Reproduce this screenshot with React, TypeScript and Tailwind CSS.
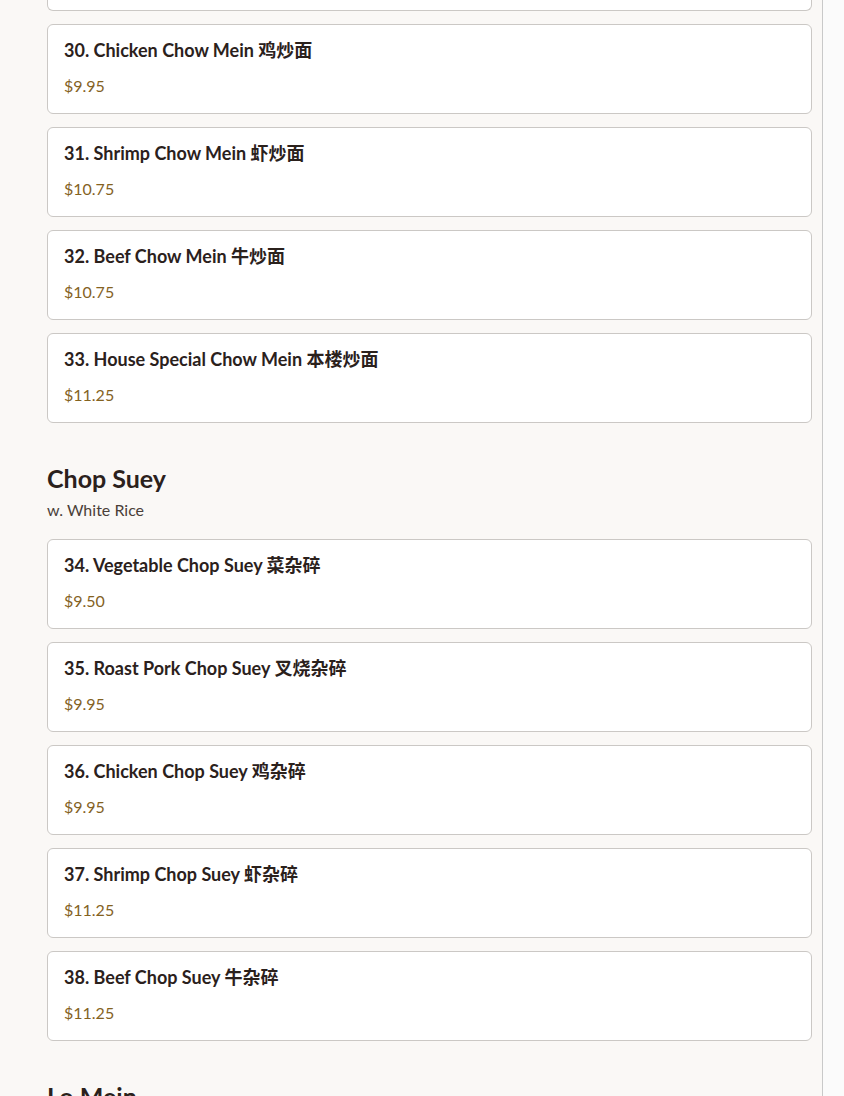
const SECTIONS = [
  {
    title: null as string | null,
    note: null as string | null,
    items: [
      { n: 30, name: "Chicken Chow Mein", zh: "鸡炒面", price: "9.95" },
      { n: 31, name: "Shrimp Chow Mein", zh: "虾炒面", price: "10.75" },
      { n: 32, name: "Beef Chow Mein", zh: "牛炒面", price: "10.75" },
      { n: 33, name: "House Special Chow Mein", zh: "本楼炒面", price: "11.25" },
    ],
  },
  {
    title: "Chop Suey",
    note: "w. White Rice",
    items: [
      { n: 34, name: "Vegetable Chop Suey", zh: "菜杂碎", price: "9.50" },
      { n: 35, name: "Roast Pork Chop Suey", zh: "叉烧杂碎", price: "9.95" },
      { n: 36, name: "Chicken Chop Suey", zh: "鸡杂碎", price: "9.95" },
      { n: 37, name: "Shrimp Chop Suey", zh: "虾杂碎", price: "11.25" },
      { n: 38, name: "Beef Chop Suey", zh: "牛杂碎", price: "11.25" },
    ],
  },
  {
    title: "Lo Mein",
    note: "w. White Rice",
    items: [],
  },
];

export default function App() {
  return (
    <div className="flex h-[1096px] w-full overflow-hidden bg-[#fbfbfb] font-['Lato','Noto_Sans_CJK_SC',sans-serif] text-[#2b211c]">
      <main className="w-[823px] shrink-0 border-r border-[#c9c9c9] bg-[#faf8f6] pl-[47px] pr-[10px]">
        {/* bas de la carte précédente (29), coupée par le défilement */}
        <div className="h-[11px] rounded-b-md border border-t-0 border-[#cbc8c5] bg-white" />
        <div className="mt-[13px] flex flex-col">
          {SECTIONS.map((s, i) => (
            <section key={i} className={i > 0 ? "mt-[39px]" : ""}>
              {s.title && (
                <>
                  <h2 className="text-[25px] font-bold leading-8">{s.title}</h2>
                  <p className="mt-[5px] text-base leading-[22px] text-[#4a3f39]">
                    {s.note}
                  </p>
                </>
              )}
              {s.items.length > 0 && (
                <div className={`flex flex-col gap-[13px] ${s.title ? "mt-[18px]" : ""}`}>
                  {s.items.map((it) => (
                    <div
                      key={it.n}
                      className="rounded-md border border-[#cbc8c5] bg-white px-4 pb-4 pt-[13px]"
                    >
                      <p className="text-lg font-bold leading-6">
                        {it.n}. {it.name} {it.zh}
                      </p>
                      <p className="mt-[13px] text-base leading-[22px] text-[#84621f]">
                        ${it.price}
                      </p>
                    </div>
                  ))}
                </div>
              )}
            </section>
          ))}
        </div>
      </main>
    </div>
  );
}
